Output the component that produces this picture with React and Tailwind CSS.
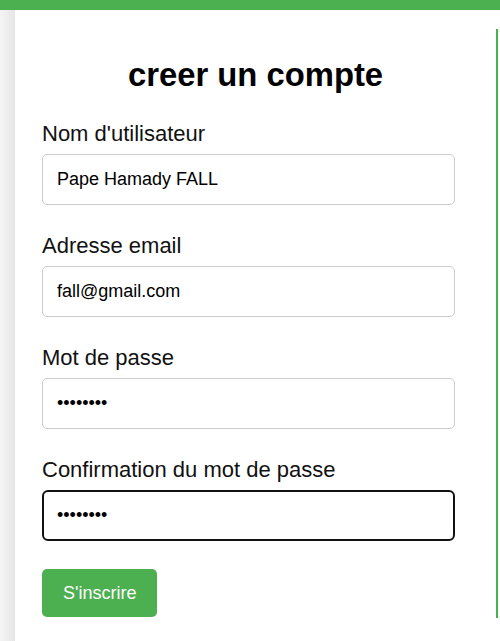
import React from 'react';

const fields = [
  { id: 'username', label: "Nom d'utilisateur", type: 'text', value: 'Pape Hamady FALL' },
  { id: 'email', label: 'Adresse email', type: 'email', value: 'fall@gmail.com' },
  { id: 'password', label: 'Mot de passe', type: 'password', value: 'password' },
  { id: 'confirm', label: 'Confirmation du mot de passe', type: 'password', value: 'password', active: true }
];

const Field = ({ id, label, type, value, active }) => (
  <div className="flex flex-col mb-[28px]">
    <label htmlFor={id} className="text-[22px] leading-[25px] text-[#111] mb-[8px]">
      {label}
    </label>
    <input
      id={id}
      type={type}
      defaultValue={value}
      autoFocus={active}
      className={`w-[413px] h-[51px] text-[18px] text-black bg-white outline-none ${
        active ? 'border-2 border-[#111] rounded-[6px] px-[13px]' : 'border border-[#cccccc] rounded-[5px] px-[14px]'
      }`}
    />
  </div>
);

const App = () => {
  return (
    <div className="w-[500px] h-[641px] overflow-hidden flex flex-col bg-white" style={{ fontFamily: '"Liberation Sans", Arial, sans-serif' }}>
      <div className="h-[10px] bg-[#4caf50] shrink-0" />
      <div className="flex flex-1">
        <div className="w-[15px] shrink-0 bg-gradient-to-r from-[#f4f4f4] to-[#e6e6e6]" />
        <main className="flex-1 bg-white pt-[46px] pl-[27px]">
          <h1 className="text-[32.8px] leading-[37px] font-bold text-black text-center pr-[27px] mb-[28px]">
            creer un compte
          </h1>
          <form onSubmit={(e) => e.preventDefault()}>
            {fields.map((f) => (
              <Field key={f.id} {...f} />
            ))}
            <button
              type="submit"
              className="h-[48px] px-[21px] bg-[#4caf50] text-white text-[18px] rounded-[5px]"
            >
              S'inscrire
            </button>
          </form>
        </main>
        <div className="w-[4px] shrink-0 flex">
          <div className="w-[2px] bg-[#4caf50] mt-[19px] h-[589px]" />
        </div>
      </div>
    </div>
  );
};

export default App;
